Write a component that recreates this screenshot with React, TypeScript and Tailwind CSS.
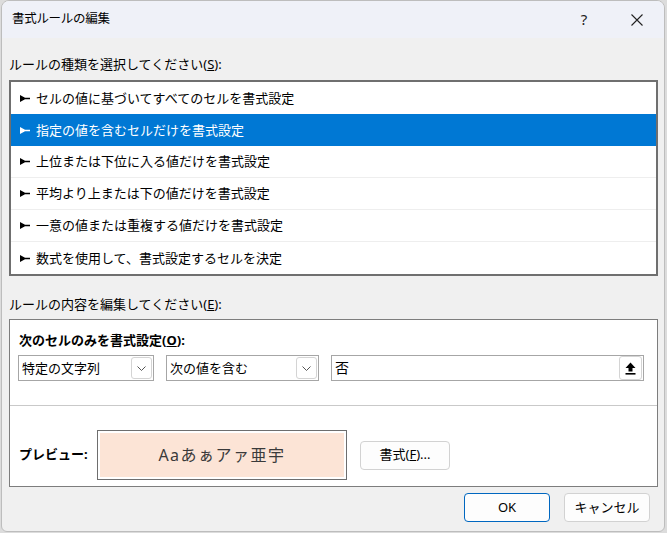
import React from "react";

const font = { fontFamily: '"Noto Sans", "Noto Sans CJK JP", sans-serif' };

const rules = [
  "セルの値に基づいてすべてのセルを書式設定",
  "指定の値を含むセルだけを書式設定",
  "上位または下位に入る値だけを書式設定",
  "平均より上または下の値だけを書式設定",
  "一意の値または重複する値だけを書式設定",
  "数式を使用して、書式設定するセルを決定",
];

function Pointer({ color }: { color: string }) {
  return (
    <svg width="10" height="7" viewBox="0 0 10 7" className="shrink-0">
      <polygon points="0,0 5,2.8 10,2.8 10,4.2 5,4.2 0,7" fill={color} />
    </svg>
  );
}

function Chevron() {
  return (
    <svg width="9" height="5" viewBox="0 0 9 5">
      <path d="M0.5 0.5 L4.5 4.5 L8.5 0.5" fill="none" stroke="#555" strokeWidth="1" />
    </svg>
  );
}

function Select({ label, width }: { label: string; width: string }) {
  return (
    <div className={`${width} h-[26px] border border-[#a6a6a6] bg-white flex items-center pl-[3px] pr-[1px]`}>
      <span className="flex-1 text-[13px] text-black leading-none">{label}</span>
      <div className="w-[21px] h-[22px] border border-[#d4d4d4] rounded-[3px] bg-white flex items-center justify-center">
        <Chevron />
      </div>
    </div>
  );
}

export default function App() {
  return (
    <div className="w-[667px] h-[533px] bg-[#dcdcdc] pl-[1px] overflow-hidden" style={font}>
      <div className="w-[664px] h-[532px] bg-[#f0f0f0] rounded-t-[8px] rounded-b-[6px] border border-[#bdbdbd] overflow-hidden flex flex-col">
        {/* Title bar */}
        <div className="h-[37px] bg-[#eff1f8] flex items-center pl-[10px] shrink-0">
          <span className="flex-1 text-[12.5px] text-black tracking-[-0.3px]">書式ルールの編集</span>
          <span className="w-[20px] text-[15px] text-[#222] text-center mr-[37px]">?</span>
          <svg width="12" height="12" viewBox="0 0 12 12" className="mr-[21px]">
            <path d="M0.5 0.5 L11.5 11.5 M11.5 0.5 L0.5 11.5" stroke="#222" strokeWidth="1.1" />
          </svg>
        </div>

        <div className="px-[7px] flex flex-col">
          <div className="pt-[16px] pb-[6px] h-[42px] text-[13px] leading-[20px] text-black">
            ルールの種類を選択してください(<span className="underline">S</span>):
          </div>

          {/* Rule type list */}
          <div className="w-[649px] border-2 border-[#6f6f6f] bg-white">
            {rules.map((r, i) => {
              const sel = i === 1;
              return (
                <div
                  key={r}
                  className={`h-[32px] flex items-center gap-[6px] pl-[9px] text-[13px] ${
                    sel ? "bg-[#0078d4] text-white" : "text-black"
                  } ${i < 5 && !sel && i !== 0 ? "border-b border-[#eeeeee]" : ""}`}
                >
                  <Pointer color={sel ? "#ffffff" : "#000000"} />
                  <span className="leading-none">{r}</span>
                </div>
              );
            })}
          </div>

          <div className="pt-[18px] pb-[5px] text-[13px] leading-[20px] text-black">
            ルールの内容を編集してください(<span className="underline">E</span>):
          </div>

          {/* Rule description panel */}
          <div className="w-[649px] h-[168px] border border-[#7d7d7d] bg-white flex flex-col">
            <div className="px-[9px] pt-[10px]">
              <div className="text-[13px] leading-[20px] font-bold text-black">
                次のセルのみを書式設定(<span className="underline">O</span>):
              </div>
              <div className="mt-[5px] flex items-center gap-[12px] -ml-[1px]">
                <Select label="特定の文字列" width="w-[136px]" />
                <Select label="次の値を含む" width="w-[153px]" />
                <div className="w-[313px] h-[26px] border border-[#a6a6a6] bg-white flex items-center pl-[3px] pr-[1px]">
                  <span className="flex-1 text-[14px] text-black leading-none">否</span>
                  <div className="w-[23px] h-[24px] border border-[#d4d4d4] rounded-[3px] bg-white flex items-center justify-center">
                    <svg width="11" height="13" viewBox="0 0 11 13">
                      <polygon points="5.5,0.5 10.5,6 7.5,6 7.5,9.5 3.5,9.5 3.5,6 0.5,6" fill="#000" />
                      <rect x="0.5" y="11" width="10" height="1.6" fill="#000" />
                    </svg>
                  </div>
                </div>
              </div>
            </div>

            <div className="mt-[24px] h-px bg-[#c9c9c9]" />

            <div className="flex items-center px-[9px] mt-[24px]">
              <span className="w-[78px] text-[13px] font-bold text-black">プレビュー:</span>
              <div className="w-[250px] h-[50px] border border-[#6e6e6e] bg-white p-[2px]">
                <div className="w-full h-full bg-[#fce4d6] flex items-center justify-center text-[16px] text-[#3a3a3a] tracking-[1.5px]">
                  Aaあぁアァ亜宇
                </div>
              </div>
              <button className="ml-[13px] w-[90px] h-[29px] border border-[#d2d2d2] rounded-[4px] bg-[#fdfdfd] text-[13px] text-black">
                書式(<span className="underline">F</span>)...
              </button>
            </div>
          </div>

          {/* Footer buttons */}
          <div className="flex justify-end gap-[14px] mt-[6px] pr-[7px]">
            <button className="w-[86px] h-[29px] border border-[#0067c0] rounded-[4px] bg-[#fdfdfd] text-[13px] text-black">
              OK
            </button>
            <button className="w-[86px] h-[29px] border border-[#d2d2d2] rounded-[4px] bg-[#fdfdfd] text-[13px] text-black">
              キャンセル
            </button>
          </div>
        </div>
      </div>
    </div>
  );
}
